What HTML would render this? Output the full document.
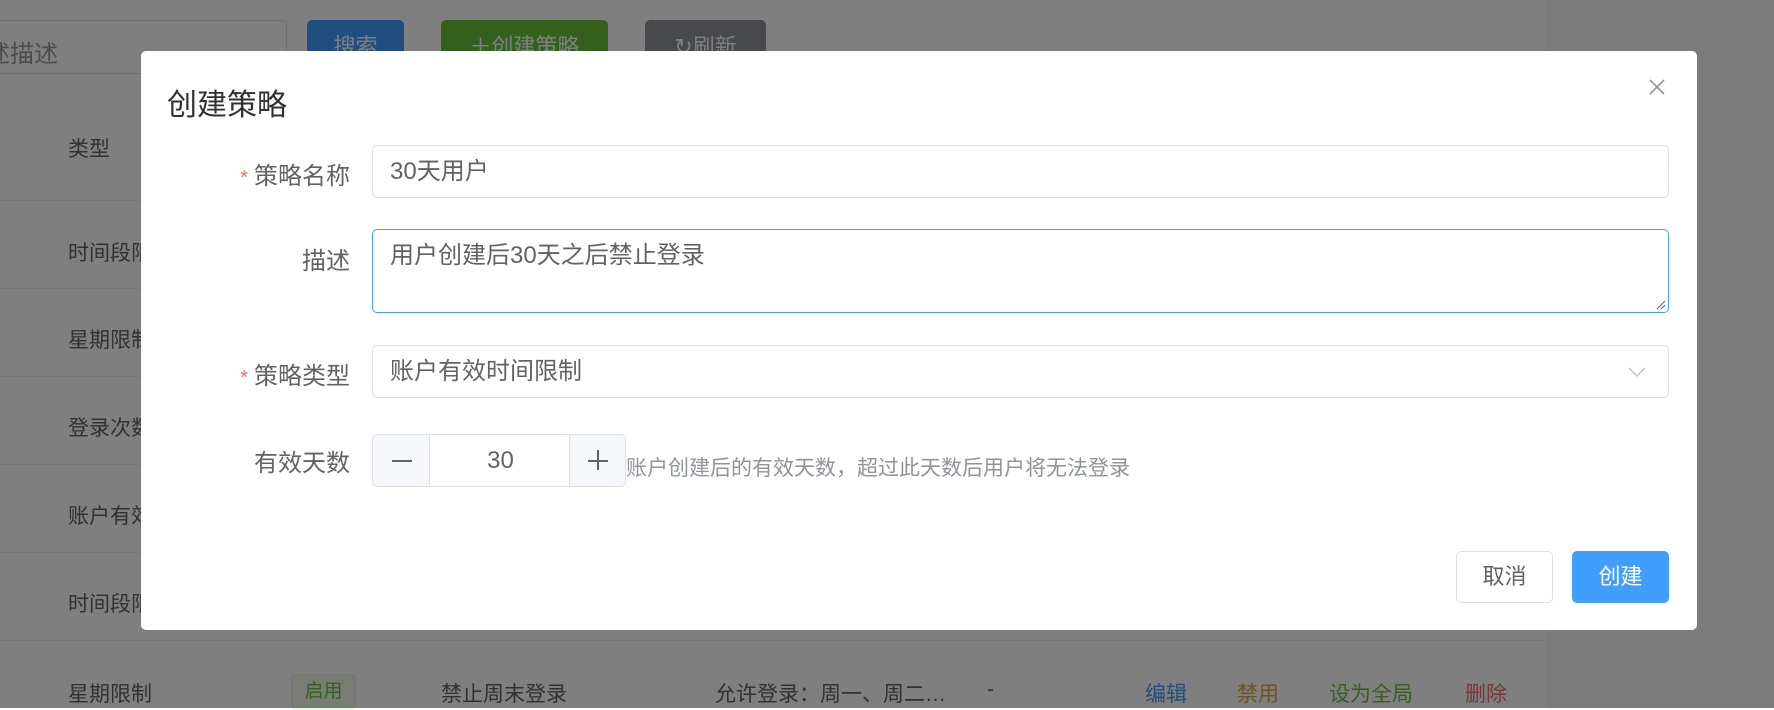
<!DOCTYPE html>
<html><head><meta charset="utf-8"><style>
*{box-sizing:border-box;margin:0;padding:0}
body{width:1774px;height:708px;overflow:hidden;position:relative;background:#fff;font-family:"Liberation Sans","Noto Sans CJK SC",sans-serif;color:#606266}
.a{position:absolute}
.row{left:0;width:1546px;border-bottom:1px solid #ebeef5}
.t{font-size:21px;color:#606266;white-space:nowrap}
.mask{left:0;top:0;width:1774px;height:708px;background:rgba(0,0,0,.5)}
.modal{left:141px;top:51px;width:1556px;height:579px;background:#fff;border-radius:5px}
.lbl{font-size:24px;color:#606266;text-align:right;width:220px;white-space:nowrap}
.lbl b{color:#f56c6c;font-weight:normal;margin-right:6px;font-size:20px}
.in{border:1px solid #dcdfe6;border-radius:5px;background:#fff;font-size:24px;color:#606266;padding-left:17px;white-space:nowrap}
</style></head><body>
<div class="a" style="left:1546px;top:0;width:228px;height:708px;background:#f7f7f7"></div>
<div class="a" style="left:-10px;top:20px;width:297px;height:54px;border:1px solid #dcdfe6;border-radius:5px"></div>
<div class="a t" style="left:-14px;top:34px;font-size:24px;color:#999">述描述</div>
<div class="a" style="left:307px;top:20px;width:97px;height:54px;background:#409eff;border-radius:5px;color:#fff;font-size:22px;text-align:center;line-height:54px">搜索</div>
<div class="a" style="left:441px;top:20px;width:167px;height:54px;background:#67c23a;border-radius:5px;color:#fff;font-size:22px;text-align:center;line-height:54px">＋创建策略</div>
<div class="a" style="left:645px;top:20px;width:121px;height:54px;background:#909399;border-radius:5px;color:#fff;font-size:22px;text-align:center;line-height:54px">↻刷新</div>
<div class="a t" style="left:68px;top:133px">类型</div>
<div class="a row" style="top:200px"></div>
<div class="a t" style="left:68px;top:237px">时间段限制</div>
<div class="a row" style="top:288px"></div>
<div class="a t" style="left:68px;top:324px">星期限制</div>
<div class="a row" style="top:376px"></div>
<div class="a t" style="left:68px;top:412px">登录次数</div>
<div class="a row" style="top:464px"></div>
<div class="a t" style="left:68px;top:500px">账户有效</div>
<div class="a row" style="top:552px"></div>
<div class="a t" style="left:68px;top:588px">时间段限制</div>
<div class="a row" style="top:640px"></div>
<div class="a t" style="left:68px;top:678px">星期限制</div>
<div class="a" style="left:291px;top:674px;width:65px;height:36px;background:#f0f9eb;border:1px solid #e1f3d8;border-radius:4px;color:#67c23a;font-size:19px;text-align:center;line-height:34px">启用</div>
<div class="a t" style="left:441px;top:678px">禁止周末登录</div>
<div class="a t" style="left:715px;top:678px">允许登录：周一、周二…</div>
<div class="a t" style="left:987px;top:678px">-</div>
<div class="a t" style="left:1145px;top:678px;color:#409eff">编辑</div>
<div class="a t" style="left:1237px;top:678px;color:#e6a23c">禁用</div>
<div class="a t" style="left:1329px;top:678px;color:#67c23a">设为全局</div>
<div class="a t" style="left:1465px;top:678px;color:#f56c6c">删除</div>
<div class="a mask"></div>

<div class="a modal"></div>
<div class="a" style="left:167px;top:80px;font-size:30px;color:#303133">创建策略</div>
<svg class="a" style="left:1649px;top:79px" width="16" height="16" viewBox="0 0 16 16"><path d="M1 1L15 15M15 1L1 15" stroke="#909399" stroke-width="1.6"/></svg>

<div class="a lbl" style="left:130px;top:156px"><b>*</b>策略名称</div>
<div class="a in" style="left:372px;top:145px;width:1297px;height:53px;line-height:51px">30天用户</div>

<div class="a lbl" style="left:130px;top:241px">描述</div>
<div class="a in" style="left:372px;top:229px;width:1297px;height:84px;border-color:#409eff;padding-top:12px;line-height:28px">用户创建后30天之后禁止登录</div>
<svg class="a" style="left:1656px;top:300px" width="10" height="10"><path d="M1 9L9 1M5 9L9 5" stroke="#606266" stroke-width="1"/></svg>

<div class="a lbl" style="left:130px;top:356px"><b>*</b>策略类型</div>
<div class="a in" style="left:372px;top:345px;width:1297px;height:53px;line-height:51px">账户有效时间限制</div>
<svg class="a" style="left:1628px;top:366px" width="18" height="12"><path d="M1 2L9 10L17 2" stroke="#c0c4cc" stroke-width="1.5" fill="none"/></svg>

<div class="a lbl" style="left:130px;top:443px">有效天数</div>
<div class="a" style="left:372px;top:434px;width:254px;height:53px;border:1px solid #dcdfe6;border-radius:5px;background:#fff;overflow:hidden">
 <div class="a" style="left:0;top:0;width:57px;height:51px;background:#f5f7fa;border-right:1px solid #dcdfe6"></div>
 <div class="a" style="right:0;top:0;width:56px;height:51px;background:#f5f7fa;border-left:1px solid #dcdfe6"></div>
 <div class="a" style="left:57px;top:0;width:141px;height:51px;text-align:center;line-height:51px;font-size:24px;color:#606266">30</div>
</div>
<div class="a" style="left:392px;top:460px;width:20px;height:1.5px;background:#606266"></div>
<div class="a" style="left:588px;top:460px;width:20px;height:1.5px;background:#606266"></div>
<div class="a" style="left:597px;top:450px;width:1.5px;height:20px;background:#606266"></div>
<div class="a" style="left:626px;top:452px;font-size:21px;color:#909399;white-space:nowrap">账户创建后的有效天数，超过此天数后用户将无法登录</div>

<div class="a" style="left:1456px;top:551px;width:97px;height:52px;border:1px solid #dcdfe6;border-radius:5px;background:#fff;text-align:center;line-height:50px;font-size:22px;color:#606266">取消</div>
<div class="a" style="left:1572px;top:551px;width:97px;height:52px;border-radius:5px;background:#409eff;text-align:center;line-height:52px;font-size:22px;color:#fff">创建</div>
</body></html>
